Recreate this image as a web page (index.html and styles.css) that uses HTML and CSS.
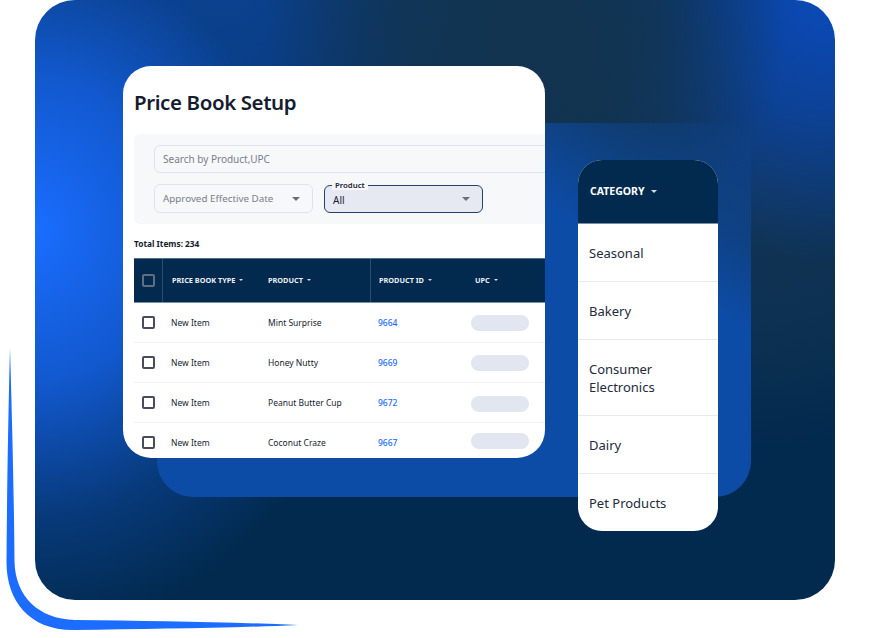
FILE: index.html
```html
<!DOCTYPE html>
<html lang="en">
<head>
  <meta charset="UTF-8">
  <title>Price Book Setup</title>
  <link rel="stylesheet" href="styles.css">
</head>
<body>

  <div class="scene">
    <!-- blue corner swoosh -->
    <svg class="swoosh" width="300" height="290" viewBox="0 0 300 290">
      <path d="M10 2 C8 80 7 150 6.500 215 C6 255 30 285 75 284 C150 283 230 282 298 279 C230 276 150 275 75 274 C38 273 15 250 14.500 215 C14 150 12 70 10 2 Z" fill="#1c6dff"/>
    </svg>

    <div class="backdrop"></div>
    <div class="backdrop-inner"></div>

    <!-- Price book card -->
    <div class="card book">
      <h1>Price Book Setup</h1>

      <div class="filters">
        <div class="search">Search by Product,UPC</div>
        <div class="filter-row">
          <div class="select">
            <span>Approved Effective Date</span>
            <i class="caret-gray"></i>
          </div>
          <div class="select select-active">
            <label>Product</label>
            <span>All</span>
            <i class="caret-gray"></i>
          </div>
        </div>
      </div>

      <div class="total">Total Items: 234</div>

      <div class="table">
        <div class="row head">
          <div class="cell cell-check"><b class="check"></b></div>
          <div class="cell">PRICE BOOK TYPE <i class="caret"></i></div>
          <div class="cell">PRODUCT <i class="caret"></i></div>
          <div class="cell cell-line">PRODUCT ID <i class="caret"></i></div>
          <div class="cell">UPC <i class="caret"></i></div>
        </div>
        <div class="row">
          <div class="cell cell-check"><b class="check"></b></div>
          <div class="cell">New Item</div>
          <div class="cell">Mint Surprise</div>
          <div class="cell link">9664</div>
          <div class="cell"><span class="pill"></span></div>
        </div>
        <div class="row">
          <div class="cell cell-check"><b class="check"></b></div>
          <div class="cell">New Item</div>
          <div class="cell">Honey Nutty</div>
          <div class="cell link">9669</div>
          <div class="cell"><span class="pill"></span></div>
        </div>
        <div class="row">
          <div class="cell cell-check"><b class="check"></b></div>
          <div class="cell">New Item</div>
          <div class="cell">Peanut Butter Cup</div>
          <div class="cell link">9672</div>
          <div class="cell"><span class="pill pill-low"></span></div>
        </div>
        <div class="row">
          <div class="cell cell-check"><b class="check"></b></div>
          <div class="cell">New Item</div>
          <div class="cell">Coconut Craze</div>
          <div class="cell link">9667</div>
          <div class="cell"><span class="pill pill-high"></span></div>
        </div>
      </div>
    </div>

    <!-- Category card -->
    <div class="card category">
      <div class="category-head">CATEGORY <i class="caret"></i></div>
      <div class="category-item">Seasonal</div>
      <div class="category-item">Bakery</div>
      <div class="category-item category-tall">Consumer<br>Electronics</div>
      <div class="category-item">Dairy</div>
      <div class="category-item">Pet Products</div>
    </div>
  </div>

</body>
</html>
```

FILE: styles.css
```css
html, body {
  margin: 0;
  background: #fff;
}

body {
  font-family: "Noto Sans", sans-serif;
  color: #1b2235;
}

.scene {
  position: relative;
  width: 870px;
  height: 638px;
  overflow: hidden;
}

.swoosh {
  position: absolute;
  left: 0;
  top: 346px;
}

.backdrop {
  position: absolute;
  left: 35px;
  top: 0;
  width: 800px;
  height: 600px;
  border-radius: 40px;
  background:
    radial-gradient(ellipse 260px 230px at 490px 35px, rgba(18,52,80,1) 0%, rgba(18,52,80,0.85) 45%, rgba(18,52,80,0) 100%),
    radial-gradient(ellipse 250px 260px at 790px 0px, #0b4ab8 0%, rgba(11,74,184,0.7) 40%, rgba(11,74,184,0) 100%),
    radial-gradient(ellipse 340px 400px at 0px 230px, #1a6dff 0%, #1259cf 38%, rgba(10,64,140,0.7) 72%, rgba(1,42,78,0) 100%),
    radial-gradient(ellipse 300px 260px at 720px 190px, rgba(18,52,84,1) 0%, rgba(18,52,84,0.7) 50%, rgba(18,52,84,0) 100%),
    radial-gradient(ellipse 480px 300px at 180px 0px, #0c4291 0%, rgba(12,66,145,0) 100%),
    #022a4e;
}

.backdrop-inner {
  position: absolute;
  left: 157px;
  top: 123px;
  width: 594px;
  height: 374px;
  border-radius: 0 0 36px 36px;
  background: linear-gradient(to top right, #0d4ca6 72%, rgba(13,76,166,0) 100%);
}

.card {
  position: absolute;
  background: #fff;
  overflow: hidden;
}

/* price book */
.book {
  left: 123px;
  top: 66px;
  width: 422px;
  height: 392px;
  border-radius: 28px;
}

h1 {
  margin: 22px 0 0 11px;
  font-size: 20.500px;
  line-height: 29px;
  font-weight: 600;
  letter-spacing: -0.400px;
  color: #151c30;
}

.filters {
  margin: 17px 0 0 11px;
  width: 411px;
  height: 90px;
  padding: 11px 0 0 20px;
  box-sizing: border-box;
  background: #f7f8fa;
  border-radius: 6px 0 0 6px;
}

.search {
  width: 420px;
  height: 28px;
  box-sizing: border-box;
  padding-left: 8px;
  border: 1px solid #dfe2e8;
  border-radius: 6px;
  font-size: 10px;
  line-height: 26px;
  color: #777d8c;
}

.filter-row {
  display: flex;
  gap: 11px;
  margin-top: 11px;
}

.select {
  position: relative;
  display: flex;
  align-items: center;
  justify-content: space-between;
  width: 159px;
  height: 29px;
  box-sizing: border-box;
  padding: 0 12px 0 8px;
  border: 1px solid #dfe2e8;
  border-radius: 6px;
  font-size: 9.800px;
  color: #777d8c;
}

.select-active {
  height: 28px;
  margin-top: 1px;
  padding-left: 8px;
  padding-right: 12px;
  background: #e6e9f2;
  border: 1.500px solid #1f4468;
  font-size: 10px;
  color: #1b2235;
}

.select-active span {
  padding-top: 1px;
}

.select label {
  position: absolute;
  left: 7px;
  top: -6px;
  padding: 0 3px;
  background: #f7f8fa;
  font-size: 7.800px;
  line-height: 10px;
  font-weight: 600;
  color: #1b2235;
}

.caret-gray {
  width: 0;
  height: 0;
  border: 4px solid transparent;
  border-top-color: #6a6f7d;
  border-bottom: 0;
}

.total {
  margin: 14px 0 0 11px;
  font-size: 8.300px;
  line-height: 12px;
  font-weight: 700;
  color: #151c30;
}

.table {
  margin: 8px 0 0 11px;
  width: 411px;
}

.row {
  display: grid;
  grid-template-columns: 29px 97px 110px 97px 1fr;
  height: 40px;
  border-bottom: 1px solid #eff0f4;
  box-sizing: border-box;
  font-size: 8.500px;
  color: #151c30;
}

.cell {
  display: flex;
  align-items: center;
  padding-left: 8px;
  padding-bottom: 1px;
  gap: 4px;
  white-space: nowrap;
}

.check {
  display: block;
  width: 13px;
  height: 13px;
  box-sizing: border-box;
  border: 2px solid #474c5e;
  border-radius: 2px;
}

.link {
  color: #1c6dff;
  font-weight: 500;
}

.pill {
  display: block;
  width: 58px;
  height: 16px;
  margin-top: 1px;
  margin-left: -4px;
  border-radius: 8px;
  background: #e1e6f1;
}

.pill-low {
  margin-top: 4px;
}

.pill-high {
  margin-top: -2px;
}

.head {
  height: 45px;
  background: #012a4e;
  border-top: 1px solid #54708c;
  border-bottom: 1px solid #7b8fa4;
  color: #eef1f5;
  font-size: 7.300px;
  font-weight: 700;
}

.head .cell:nth-child(2) {
  padding-left: 9px;
}

.head .cell-check {
  border-right: 1px solid #2b4c6b;
}

.head .check {
  border-color: #5f6f80;
}

.head .cell-line {
  border-left: 1px solid #2b4c6b;
}

.caret {
  display: inline-block;
  width: 0;
  height: 0;
  border: 2.500px solid transparent;
  border-top-color: #d7dce3;
  border-bottom: 0;
}

/* category */
.category {
  left: 578px;
  top: 160px;
  width: 140px;
  height: 371px;
  border-radius: 24px;
}

.category-head {
  height: 64px;
  box-sizing: border-box;
  padding: 23px 0 0 12px;
  background: #012a4e;
  border-bottom: 1px solid #7b8fa4;
  color: #fff;
  font-size: 10.500px;
  line-height: 16px;
  font-weight: 700;
}

.category-head .caret {
  margin-left: 4px;
  vertical-align: 2px;
  border-width: 3px;
  border-bottom: 0;
}

.category-item {
  display: flex;
  align-items: center;
  height: 58px;
  box-sizing: border-box;
  padding-left: 11px;
  border-bottom: 1px solid #e9eaf0;
  font-size: 13px;
  line-height: 18px;
  color: #232a3d;
}

.category-tall {
  height: 76px;
}

.category-item:last-child {
  border-bottom: 0;
}
```
